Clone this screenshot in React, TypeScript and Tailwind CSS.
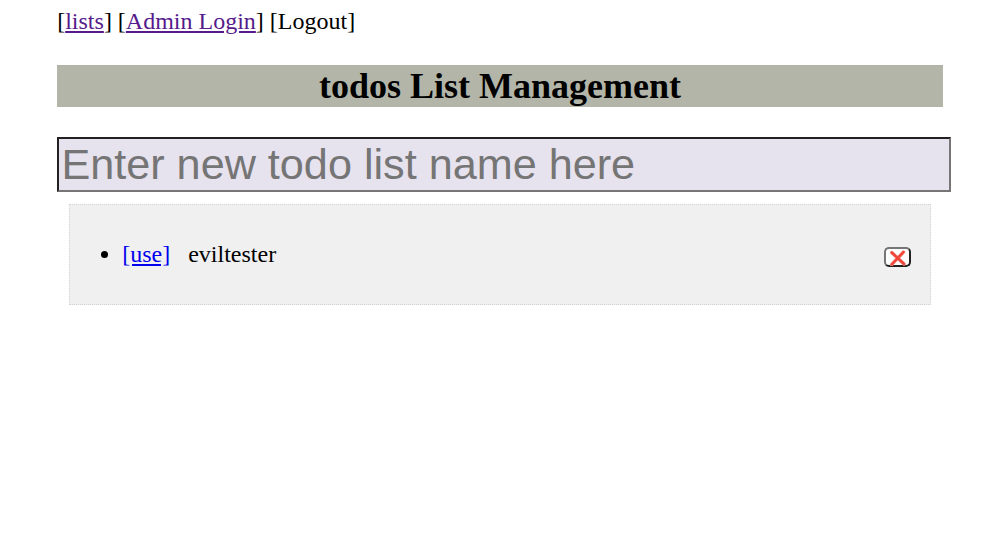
export default function App() {
  return (
    <main className="min-h-[550px] bg-white px-[57px] font-['Liberation_Serif',serif] text-[24px] leading-[27px] text-black">
      <nav className="pt-[8px] pl-[0.2px]">
        [<a href="#lists" className="text-[#551a8b] underline">lists</a>] [<a href="#login" className="text-[#551a8b] underline">Admin Login</a>] [Logout]
      </nav>
      <h1 className="mt-[30px] h-[42px] bg-[#b3b5a9] text-center text-[36px] font-bold leading-[42px]">todos List Management</h1>
      <input
        placeholder="Enter new todo list name here"
        className="mt-[30px] block h-[55px] w-[894px] border-2 border-t-[#212121] border-l-[#212121] border-r-[#767676] border-b-[#767676] bg-[#e6e2ee] px-[2.4px] py-px font-['Liberation_Sans',sans-serif] text-[43.2px] leading-[49px] placeholder:text-[#757575]"
      />
      <section className="mx-[12px] mt-[12px] h-[101px] border border-dotted border-[#d3d3d3] bg-[#f0f0f0] pt-[36px] pr-[19px] pl-[52.2px]">
        <ul className="list-disc">
          <li>
            <div className="flex justify-between">
              <span className="whitespace-pre"><a href="#use" className="text-[#0000ee] underline">[use]</a>   eviltester</span>
              <button aria-label="Delete" className="mt-[6px] flex h-[20px] w-[27px] items-center justify-center rounded-[5px] border-2 border-t-[#767676] border-l-[#767676] border-r-[#212121] border-b-[#212121] bg-white">
                <svg width="16" height="16" viewBox="0 0 16 16" className="mt-px shrink-0" fill="none" strokeLinecap="round">
                  <path d="M1.7 2.5L14 14M13.5 2L1.7 14.5" stroke="#f4998f" strokeWidth="3.5" />
                  <path d="M1.7 2.5L14 14M13.5 2L1.7 14.5" stroke="#f04438" strokeWidth="2.4" />
                </svg>
              </button>
            </div>
          </li>
        </ul>
      </section>
    </main>
  );
}
